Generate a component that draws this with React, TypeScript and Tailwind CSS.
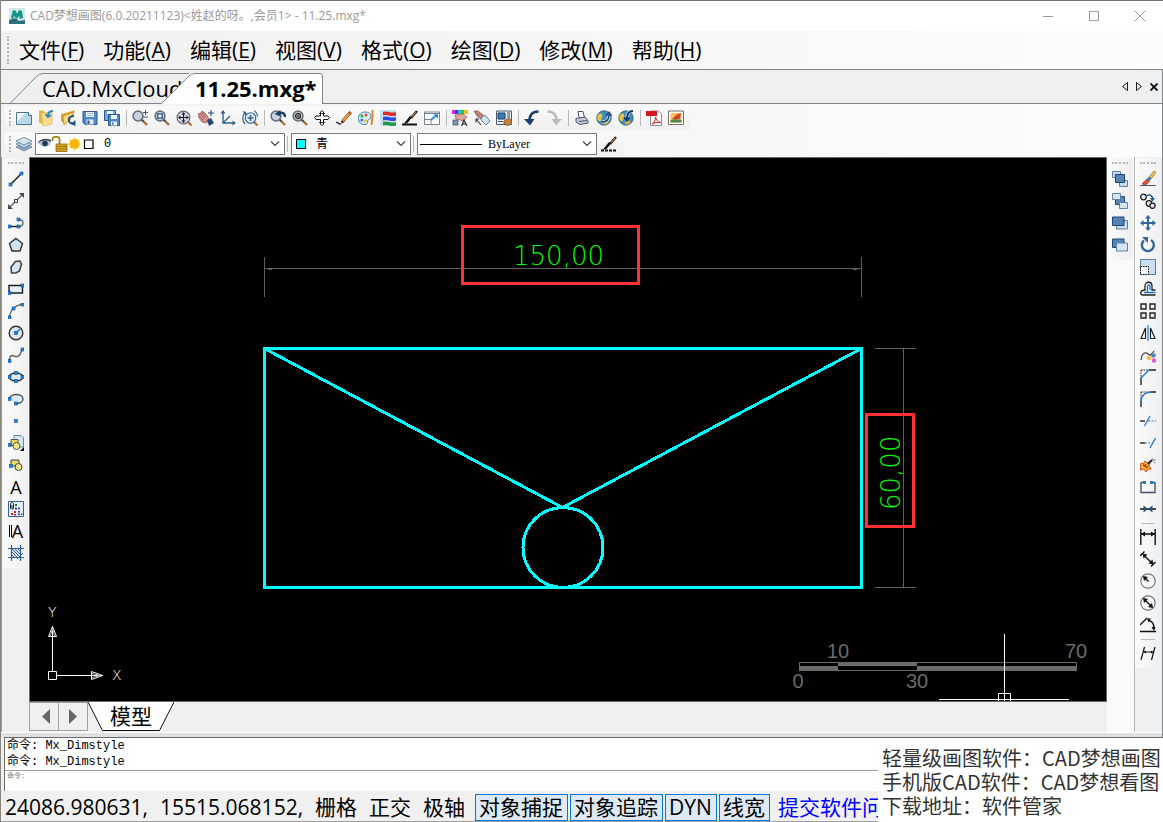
import type { ReactNode } from 'react';

type Tool = { id: string; label: string } | 'sep';

const BLUE = '#1f78d1';
const DARK = '#1c1c1c';

const node = (x: number, y: number) => (
  <rect x={x - 1.5} y={y - 1.5} width="3" height="3" fill="#1f86e0" stroke="#0b4f96" strokeWidth=".6" />
);

const lens = (
  <>
    <path d="M10 10l5 5" stroke="#a8703a" strokeWidth="2.4" />
    <path d="M9.6 9.6l1.6 1.6" stroke="#444" strokeWidth="2" />
    <circle cx="6" cy="6" r="4.9" fill="#c6d3df" stroke="#626a75" strokeWidth="1.5" />
  </>
);

const brush = (
  <>
    <path d="M15 1L9 8" stroke="#3a2a20" strokeWidth="2.6" />
    <path d="M14 2L10 6.600" stroke="#c98b4f" strokeWidth="1" />
    <path d="M10 7.500L5.500 13l-4 .9L6 8.500l2-2.500z" fill="#111" />
  </>
);

const globe = (
  <>
    <circle cx="8" cy="8" r="7.2" fill="#3f8fb8" stroke="#29546c" strokeWidth=".8" />
    <path d="M2 5c3-3 5-1 4 2s-1 5-3 4-2-4-1-6z" fill="#e6c64a" />
    <path d="M7 12c2-2 5-1 6 0-1 2-4 3-6 2z" fill="#e0a93a" />
  </>
);

const icons: Record<string, ReactNode> = {
  fresh: (
    <>
      <path d="M.5 2.5h12l3 3v9H.5z" fill="#b9d9ea" stroke="#4c7388" />
      <path d="M1 3h8l-8 9z" fill="#f4fafd" />
      <path d="M12.5 2.5v3h3" fill="#fff" stroke="#4c7388" />
    </>
  ),
  open: (
    <>
      <path d="M1 .5h5l1 2v12L1 13z" fill="#e8b93c" />
      <path d="M3 3l11-1v12l-9 2z" fill="#f7dd8c" stroke="#d9ab3a" strokeWidth=".6" />
      <path d="M15 1c-3 0-5 2-5 5M7.5 4L10 7l3-2" fill="none" stroke="#2b86c5" strokeWidth="1.8" />
    </>
  ),
  openCloud: (
    <>
      <path d="M1 4l8-2 6-2-2 5-9 8-3-2z" fill="#d8a631" />
      <path d="M3 6l11-4-4 8-6 5z" fill="#f6da83" stroke="#b98720" strokeWidth=".7" />
      <path d="M14 6c-4 0-6 2-5 5 .6 2 3 3 5 2" fill="none" stroke="#23507c" strokeWidth="2" />
      <path d="M15.5 10v6l-5-2z" fill="#23507c" />
    </>
  ),
  save: (
    <>
      <path d="M1 1.5h14v13H3l-2-2z" fill="#5089c6" stroke="#2c5b8f" />
      <path d="M4 2h8v5H4z" fill="#eaf3fb" />
      <path d="M5 3.5h6M5 5.5h6" stroke="#8eb3d6" strokeWidth=".8" />
      <path d="M4.5 9.5h7v5h-7z" fill="#dfeaf4" />
      <path d="M5.5 10.5h2V14h-2z" fill="#2c5b8f" />
    </>
  ),
  saveAll: (
    <>
      <path d="M.5.5h11v10H.5z" fill="#7ba7d6" stroke="#2c5b8f" />
      <path d="M3 1h6v3H3z" fill="#eaf3fb" />
      <path d="M4.5 4.5h11v11h-11z" fill="#5089c6" stroke="#2c5b8f" />
      <path d="M7 5h6v4H7zM7 11.5h6v4H7z" fill="#eaf3fb" />
      <path d="M8 12.5h1.5v2H8z" fill="#2c5b8f" />
    </>
  ),
  zoomRealtime: (
    <>
      {lens}
      <path d="M11 2.5h5M13.500 0v5M11 7h5" stroke="#34618f" strokeWidth="1.1" />
    </>
  ),
  zoomWindow: (
    <>
      {lens}
      <path d="M3.8 3.8h4.4v4.4H3.8z" fill="#fff" stroke="#1e4f86" strokeWidth="1.3" />
    </>
  ),
  zoomExtents: (
    <>
      <path d="M12 12l3.5 3.5" stroke="#a8703a" strokeWidth="2.2" />
      <circle cx="7.5" cy="7.5" r="6.4" fill="#d4d8dc" stroke="#66696e" strokeWidth="1.2" />
      <path d="M7.5 3v9M3 7.500h9" stroke="#16263a" strokeWidth="1.1" />
      <path d="M7.5 2l2 2.500h-4zM7.500 13l2-2.500h-4zM2 7.500l2.500-2v4zM13 7.500l-2.500-2v4z" fill="#16263a" />
    </>
  ),
  pan: (
    <>
      <path d="M0 4l3-1 1-2 3 2 3 4 1 4-3 2-4-1-3-4z" fill="#cf9089" stroke="#8c5550" strokeWidth=".7" />
      <path d="M2 3l4 5M4 2l4 5M1 6l4 4" stroke="#8c5550" strokeWidth=".7" />
      <path d="M9 10l4-2 3 5-5 3z" fill="#27476e" />
      <path d="M13 0v6M10 3h6" stroke="#27476e" strokeWidth="1.1" />
    </>
  ),
  axes: (
    <>
      <path d="M3 1v12h12M3 13l7-7" fill="none" stroke="#34618f" strokeWidth="1.4" />
      <path d="M.5 3.500L3 0l2.500 3.500zM12.500 10.500L16 13l-3.500 2.500z" fill="#34618f" />
    </>
  ),
  zoomAll: (
    <>
      <path d="M12 12l3.5 3.5" stroke="#a8703a" strokeWidth="2.2" />
      <circle cx="8.5" cy="8" r="5.3" fill="#e3eefa" stroke="#34618f" strokeWidth="1.1" />
      <path d="M8.5 5v6M5.500 8h6" stroke="#34618f" strokeWidth="1.5" />
      <path d="M3 14C0 11 0 5 3.500 2M3.500 2H.8M3.500 2v3M12 .8c2 1 3.500 3 3.500 5.700" fill="none" stroke="#34618f" strokeWidth="1.2" />
    </>
  ),
  zoomPrev: (
    <>
      {lens}
      <path d="M15 7c0-4-3-5-6-4" fill="none" stroke="#1d3e6d" strokeWidth="2.4" />
      <path d="M10.5 0v6.500l-6-2.500z" fill="#1d3e6d" />
    </>
  ),
  zoomObject: (
    <>
      {lens}
      <circle cx="6" cy="6" r="2.6" fill="#aebfae" stroke="#333" strokeWidth="1.2" />
      <path d="M6 3.5v5M3.500 6h5" stroke="#333" strokeWidth=".8" />
    </>
  ),
  crossArrows: (
    <>
      <path d="M6.500 6V2L8 .5 9.500 2v4H14l1.500 1.500L14 9.500H9.500V14L8 15.500 6.500 14V9.500H2L.5 7.500 2 6z" fill="#fff" stroke="#111" />
      <path d="M5 12.500h6M5 3.500h6" stroke="#111" strokeWidth=".8" />
    </>
  ),
  pencil: (
    <>
      <path d="M6 10l7.500-8.500 2 1.500L8 12l-2.500 1z" fill="#e6a046" stroke="#7a4a17" strokeWidth=".8" />
      <path d="M12.5 2l2.500 2" stroke="#b33" strokeWidth="1.3" />
      <path d="M5 13.500l1-3L8 12z" fill="#222" />
      <path d="M0 12.500c2-1 2 2 5 1.500" fill="none" stroke="#222" strokeWidth="1.4" />
    </>
  ),
  palette: (
    <>
      <path d="M7 2c4 0 6.500 2 6 5s-2 2-3 3 1 4-3 4.500S.5 12 .5 8.500 3 2 7 2z" fill="#d8ebf4" stroke="#3f7fa3" />
      <circle cx="4" cy="6" r="1.5" fill="#2aa84a" />
      <circle cx="8" cy="5" r="1.5" fill="#e04a3a" />
      <circle cx="3.8" cy="10" r="1.5" fill="#2c7be0" />
      <circle cx="7.5" cy="11" r="1.4" fill="#e8c02a" />
      <path d="M14.5 0v6l-1 9" stroke="#d98a32" strokeWidth="2" fill="none" />
    </>
  ),
  layers3: (
    <>
      <path d="M0 0h16v16H0z" fill="#c7e0ee" />
      <path d="M3 2c4-2 8 2 13 0v3.500c-5 2-9-2-13 0z" fill="#e02b2b" />
      <path d="M3 7c4-2 8 2 13 0v3.500c-5 2-9-2-13 0z" fill="#2b4be0" />
      <path d="M3 12c4-2 8 2 13 0v3.500c-5 2-9-2-13 0z" fill="#1f9a4c" />
    </>
  ),
  brushLine: (
    <>
      {brush}
      <path d="M0 14.5h15" stroke="#111" strokeWidth="2" />
    </>
  ),
  brushDots: (
    <>
      {brush}
      <path d="M0 14.5h16" stroke="#111" strokeWidth="2" strokeDasharray="3 1" />
    </>
  ),
  viewport: (
    <>
      <path d="M.5 2h15v12.500H.5z" fill="#fff" stroke="#76838f" />
      <path d="M1 3.500h14M1 9.500h6V14" fill="none" stroke="#76838f" />
      <path d="M7 10l5-4.500" stroke="#1e8bd8" strokeWidth="1.7" />
      <path d="M9.5 4.200H14v4.500z" fill="#1e8bd8" />
    </>
  ),
  colorPick: (
    <>
      <path d="M0 0h3v4H0z" fill="#e82bd0" />
      <path d="M3 0h3v4H3z" fill="#3a35e0" />
      <path d="M6 0h3v4H6z" fill="#25b8e0" />
      <path d="M9 0h3v4H9z" fill="#35c23a" />
      <path d="M12 0h4v4h-4z" fill="#ecc224" />
      <path d="M3 5l8-1 4 3-4 4-3-1-4-1z" fill="#dca59a" stroke="#935a50" strokeWidth=".7" />
      <path d="M1 10h5v5H1z" fill="#7f97b5" stroke="#33475f" strokeWidth=".7" />
      <path d="M9.5 16l2.500-6 3 6M10.500 14H14" fill="none" stroke="#222" strokeWidth="1.1" />
    </>
  ),
  handErase: (
    <>
      <path d="M0 1h4l5 4 1 3-3 1-4-3z" fill="#b9837b" stroke="#7b4b45" strokeWidth=".7" />
      <path d="M8 7l3-2 5 6-4 4-5-5z" fill="#cfe3ee" stroke="#55798d" strokeWidth=".9" />
      <path d="M2 9l5 6M2 9v3.500M2 9h3" fill="none" stroke="#333" strokeWidth="1.1" />
    </>
  ),
  settings: (
    <>
      <path d="M.5 1h15v13.500H.5z" fill="#e9eef3" stroke="#4d5a66" />
      <path d="M2 3h7v6H2z" fill="#3c78b8" stroke="#1c3d63" />
      <path d="M11 3h3M11 5h3M11 7h3M2 11.500h5" stroke="#3d4d5d" strokeWidth="1.1" />
      <path d="M8 11l5-3 3 3-4 5-4-2z" fill="#c98339" stroke="#7a4a17" strokeWidth=".7" />
    </>
  ),
  undo: (
    <>
      <path d="M14.5 1.500C8 1.500 5.500 5 5.500 11" fill="none" stroke="#1d3e6d" strokeWidth="2.6" />
      <path d="M0 9h10.500L6 15.500z" fill="#1d3e6d" />
    </>
  ),
  redo: (
    <>
      <path d="M1.5 1.500C8 1.500 10.500 5 10.500 11" fill="none" stroke="#b9bcc0" strokeWidth="2.6" />
      <path d="M16 9H5.500l4.500 6.500z" fill="#b9bcc0" />
    </>
  ),
  print: (
    <>
      <path d="M4 1.500h5l1.500 6H5z" fill="#fff" stroke="#46506b" />
      <path d="M2 8.500l9-1.500 3 3.500V13l-8 1.500L2 12z" fill="#c6cddd" stroke="#46506b" />
      <path d="M5 11.500l8-1" stroke="#46506b" />
    </>
  ),
  webOut: (
    <>
      {globe}
      <path d="M6 12c5 0 7-3 7-7" fill="none" stroke="#fff" strokeWidth="3" />
      <path d="M6 12c5 0 7-3 7-7M10 6l3-3.500L15.500 6" fill="none" stroke="#234b7c" strokeWidth="1.8" />
    </>
  ),
  webIn: (
    <>
      {globe}
      <path d="M15 1c-5 0-6 4-6 8" fill="none" stroke="#fff" strokeWidth="3.2" />
      <path d="M15 1c-5 0-6 4-6 8" fill="none" stroke="#173a66" strokeWidth="2.2" />
      <path d="M5 7.500h7.500L9 12z" fill="#173a66" />
    </>
  ),
  pdf: (
    <>
      <path d="M4.5 1h8l3 3v11.500h-11z" fill="#fff" stroke="#8a8a8a" />
      <path d="M0 1h11v5H0z" fill="#d8181c" />
      <path d="M6 14c2-1 4-5 3.500-7 1 3 2.500 5 5 5.500-3-.5-6 0-8.500 1.500z" fill="none" stroke="#d8181c" />
    </>
  ),
  picture: (
    <>
      <path d="M.5 1h15v13.500H.5z" fill="#fff" stroke="#77706a" />
      <path d="M2.500 3h11v9.500h-11z" fill="#f2c46b" />
      <path d="M4 9l4-4 5-2-1 6z" fill="#d8432b" />
      <path d="M2.500 10l5-1 6 1v2.500h-11z" fill="#55864a" />
    </>
  ),
  layerStack: (
    <>
      <path d="M0 11l8-3.500 8 3.500-8 4z" fill="#8fa9c4" stroke="#4f6f91" strokeWidth=".7" />
      <path d="M0 8l8-3.500L16 8l-8 4z" fill="#b8cce0" stroke="#4f6f91" strokeWidth=".7" />
      <path d="M0 5l8-3.500L16 5 8 9z" fill="#d8e5f1" stroke="#4f6f91" strokeWidth=".7" />
    </>
  ),
  line: (
    <>
      <path d="M2.5 13.500l11-11" stroke={DARK} strokeWidth="1.5" />
      {node(2.5, 13.5)}
      {node(13.5, 2.5)}
    </>
  ),
  xline: (
    <>
      <path d="M1.5 14.500l13-13" stroke="#555a66" strokeWidth="1.2" />
      <path d="M0 16v-5l5 5zM16 0v5l-5-5z" fill="#43485a" />
      <path d="M6.5 6.500h3v3h-3z" fill="#fff" stroke="#333" />
    </>
  ),
  pline: (
    <>
      <path d="M1.5 11.500H11" stroke={DARK} strokeWidth="1.4" />
      <path d="M10.5 4.500c3 0 4.500 1 4.500 3.500s-2 3.500-4.500 3.500" fill="none" stroke="#6a6a6a" strokeWidth="1.4" />
      {node(1.5, 11.5)}
      {node(10.5, 11.5)}
      {node(10.5, 4.5)}
    </>
  ),
  polygon: <path d="M8 1.500l6.500 5-2.500 7.500H4L1.500 6.500z" fill="#d2e3f1" stroke="#333" strokeWidth="1.4" />,
  hull: <path d="M7.5 2.500l4.500-.5 1.500 3-2 7-3.500 2H3.500L3 8z" fill="#d2e3f1" stroke="#444" strokeWidth="1.6" />,
  rect: (
    <>
      <path d="M1 4.500h13.500V12H1z" fill="#e3eef8" stroke={DARK} strokeWidth="1.4" />
      {node(1.5, 12)}
      {node(14.5, 4.5)}
    </>
  ),
  arc: (
    <>
      <path d="M1.5 14.500C2 7 7 2 14.500 1.500" fill="none" stroke="#6d6458" strokeWidth="1.4" />
      {node(1.5, 14.5)}
      {node(5.5, 5.5)}
      {node(14.5, 1.5)}
    </>
  ),
  circle: (
    <>
      <circle cx="8" cy="8" r="6.8" fill="#dbe8f5" stroke="#333" strokeWidth="1.4" />
      <path d="M8 8l4-4" stroke={BLUE} strokeWidth="1.4" />
      {node(8, 8)}
    </>
  ),
  spline: (
    <>
      <path d="M1.5 14C1.500 8 4 8 6 9s6 2 8-7" fill="none" stroke="#6d6458" strokeWidth="1.4" />
      {node(1.5, 14)}
      {node(14.5, 2.5)}
    </>
  ),
  ellipse: (
    <>
      <ellipse cx="8" cy="8" rx="6.8" ry="4" fill="#dbe8f5" stroke="#333" strokeWidth="1.3" />
      {node(8, 4)}
      {node(8, 12)}
      {node(1.5, 8)}
      {node(14.5, 8)}
    </>
  ),
  ellipseArc: (
    <>
      <path d="M1.5 8c0-6 13.500-6 13.500 0 0 3-3 4.500-7 4.500" fill="#dbe8f5" stroke="#555" strokeWidth="1.4" />
      {node(1.5, 8)}
      {node(8, 12.5)}
    </>
  ),
  point: node(8, 8),
  insert: (
    <>
      <path d="M6 .5h7L15.500 3v9H6z" fill="#d9e8f2" stroke="#5e87a3" />
      <path d="M3 4.500h7v6H3z" fill="#e9dc5f" stroke="#556" />
      <circle cx="8.5" cy="11" r="3.5" fill="#efe68a" stroke="#556" />
      {node(2, 10)}
      <path d="M16 12v4h-4z" fill="#000" />
    </>
  ),
  block: (
    <>
      <path d="M3 3h8v6H3z" fill="#e9dc5f" stroke="#345" />
      <circle cx="10.5" cy="10" r="3.5" fill="#efe68a" stroke="#345" />
      {node(3, 9)}
    </>
  ),
  attribute: (
    <>
      <path d="M.5.5h15v15H.5z" fill="#e6eef8" stroke="#34618f" />
      <path d="M2.500 8V3c0-2 3-2 3 0v4.500c0 1-1.500 1-1.500 0V4" fill="none" stroke="#222" />
      <path d="M7 3h2v2H7zM10 6.500h2v2h-2z" fill="#1e7a35" />
      <path d="M3 12h2v2H3zM6 10h2v2H6zM6 13h2v1.500H6z" fill="#d52424" />
      <path d="M7 6.500h2v2H7zM10 10h2v1.500h-2zM10 12.500h2V14h-2zM13 12.500h1.500V14H13z" fill="#2a3fae" />
    </>
  ),
  hatch: (
    <>
      <path d="M3.5 0v16M12.500 0v16M0 3.500h16M0 12.500h16" stroke="#2f6195" strokeWidth="1.2" />
      <path d="M4 4h8v8H4z" fill="#d5e4f2" />
      <path d="M4 4l8 8M7 4l5 5M4 7l5 5M10 4l2 2M4 10l2 2M9 14l6-6" stroke="#2f6195" />
    </>
  ),
  front1: (
    <>
      <path d="M.5.5h8v6h-8zM7.500 9.500h8v6h-8z" fill="#c9dcec" stroke="#5d83a8" />
      <path d="M3.5 3.500h9v8h-9z" fill="#5583b6" stroke="#1f4878" />
    </>
  ),
  back1: (
    <>
      <path d="M3.5 3.500h9v8h-9z" fill="#5583b6" stroke="#1f4878" />
      <path d="M.5.5h8v6h-8zM7.500 9.500h8v6h-8z" fill="#d5e4f0" stroke="#5d83a8" />
    </>
  ),
  front2: (
    <>
      <path d="M4.5 5.500h11V14h-11z" fill="#c9dcec" stroke="#5d83a8" />
      <path d="M.5 2H12v8.500H.5z" fill="#5583b6" stroke="#1f4878" />
    </>
  ),
  back2: (
    <>
      <path d="M.5 2H12v8.500H.5z" fill="#5583b6" stroke="#1f4878" />
      <path d="M4.5 6h11v8h-11z" fill="#d5e4f0" stroke="#5d83a8" />
    </>
  ),
  erase: (
    <>
      <path d="M9 6l5-6 2 1.500L11 8z" fill="#f0c24a" stroke="#8a6420" strokeWidth=".7" />
      <path d="M7 8l2-2.500 2.500 2-2 2.500z" fill="#3f78ae" />
      <path d="M2.5 12L7 8l2.500 2-3 3.500H3z" fill="#e05240" stroke="#7c2a20" strokeWidth=".6" />
      <path d="M0 14.500h16" stroke="#555" />
    </>
  ),
  copy: (
    <>
      <circle cx="3.5" cy="4" r="2.8" fill="#e4ebf2" stroke="#222" strokeWidth="1.3" />
      <circle cx="9" cy="10.5" r="2.8" fill="#e4ebf2" stroke="#222" strokeWidth="1.3" />
      <circle cx="12.5" cy="12.800" r="2.6" fill="#e4ebf2" stroke="#222" strokeWidth="1.3" />
      <path d="M7 2.500c3-1.500 5.500 0 5.500 3" fill="none" stroke="#23588f" strokeWidth="1.5" />
      <path d="M10 5h5l-2.500 3.500z" fill="#23588f" />
    </>
  ),
  move: (
    <>
      <path d="M8 2v12M2 8h12" stroke="#34679c" strokeWidth="2" />
      <path d="M8 0l3 3.500H5zM8 16l3-3.500H5zM0 8l3.500-3v6zM16 8l-3.500-3v6z" fill="#34679c" />
    </>
  ),
  rotate: (
    <>
      <path d="M4 3.500a6 6 0 1 0 7-.5" fill="none" stroke="#34679c" strokeWidth="2.4" />
      <path d="M2 0h6v6z" fill="#34679c" />
    </>
  ),
  scale: (
    <>
      <path d="M.5.5h15v15H.5z" fill="#c9dff0" stroke="#5a7f9c" />
      <path d="M.5 7.500h8v8h-8z" fill="#f3f8fc" stroke="#111" strokeDasharray="1.5 1" />
    </>
  ),
  offset: (
    <>
      <path d="M15.5 14H2.500C-.5 14 0 9 5 9V5c0-5 7-5 7 0v4h3.500" fill="none" stroke="#222" strokeWidth="1.3" />
      <path d="M15.5 11.500H4M7.500 11.500v-6c0-2 2.500-2 2.500 0V9" fill="none" stroke={BLUE} strokeWidth="1.3" />
    </>
  ),
  array: <path d="M1 1h5v5H1zM10 1h5v5h-5zM1 10h5v5H1zM10 10h5v5h-5z" fill="#e9f0f7" stroke="#222" strokeWidth="1.4" />,
  mirror: (
    <>
      <path d="M1 13.500h4.500V3zM15 13.500h-4.500V3z" fill="#fff" stroke="#222" strokeWidth="1.2" />
      <path d="M8 0v16" stroke={BLUE} strokeWidth="1.2" />
    </>
  ),
  editSpline: (
    <>
      <path d="M1 13c1-8 5-8 7-6s4 0 6-3" fill="none" stroke="#444" strokeWidth="1.3" />
      <circle cx="9" cy="11" r="2.3" fill="#efc04a" />
      <circle cx="14" cy="13.5" r="2.2" fill="#d95bd0" />
      <path d="M10 8l5-2 1 3-3 2z" fill="#4e82cf" />
    </>
  ),
  chamfer: (
    <>
      <path d="M1 1h8M1 1v8" stroke="#222" strokeDasharray="1.5 1" />
      <path d="M9 1h7M1 9v7" stroke="#222" strokeWidth="1.4" />
      <path d="M1 9l8-8" stroke={BLUE} strokeWidth="1.4" />
    </>
  ),
  fillet: (
    <>
      <path d="M1 1h8M1 1v9" stroke="#222" strokeDasharray="1.5 1" />
      <path d="M10 1h6M1 10v6" stroke="#222" strokeWidth="1.4" />
      <path d="M1 11C1 5 5 1 12 1" fill="none" stroke={BLUE} strokeWidth="1.7" />
    </>
  ),
  trim: (
    <>
      <path d="M0 8h5" stroke="#222" strokeWidth="1.4" />
      <path d="M8 8h8" stroke={BLUE} strokeWidth="1.2" strokeDasharray="2 1.5" />
      <path d="M4.5 13L10 3" stroke={BLUE} strokeWidth="1.3" />
    </>
  ),
  extend: (
    <>
      <path d="M0 8h5" stroke="#222" strokeWidth="1.4" />
      <path d="M5 8h7" stroke={BLUE} strokeWidth="1.2" strokeDasharray="2 1.5" />
      <path d="M10 13l5.500-10" stroke={BLUE} strokeWidth="1.3" />
    </>
  ),
  explode: (
    <>
      <path d="M0 7l4-1 1-2 2 2 3-1-1 4 2 3-3 0-2 3-2-3-4 1 1-3z" fill="#f6c430" stroke="#d9401c" />
      <path d="M3 8l2 1M6 7l-1 3M8 9l-2 2" stroke="#b3201a" strokeWidth="1.4" />
      <path d="M8 7l4-4" stroke="#333" strokeWidth="2.4" />
      <path d="M12 3l1-2M13 3.500l3-1M13.500 5l2 1" stroke="#6f8aa3" />
    </>
  ),
  breakAt: (
    <>
      <path d="M3 3.500H1v10h14v-10h-2" fill="none" stroke="#46536b" strokeWidth="1.4" />
      <path d="M3 2h3v3H3zM10 2h3v3h-3z" fill={BLUE} />
    </>
  ),
  join: (
    <>
      <path d="M0 8h16" stroke="#222" strokeWidth="1.6" />
      <path d="M3.5 4.500L8 8l-4.500 3.500zM12.500 4.500L8 8l4.500 3.500z" fill="#2c5170" />
    </>
  ),
  dimLinear: (
    <>
      <path d="M.8 0v16M15.200 0v16M1 5h14" stroke="#111" strokeWidth="1.4" />
      <path d="M1 5l4-2.500v5zM15 5l-4-2.500v5z" fill="#111" />
    </>
  ),
  dimAligned: (
    <>
      <path d="M0 5L4.500.5M11 15.500l4.500-4.500M3 3.500l9.500 9" stroke="#111" strokeWidth="1.4" />
      <path d="M2.5 2.500l5 1-4 4zM13.500 13.500l-5-1 4-4z" fill="#111" />
    </>
  ),
  dimRadius: (
    <>
      <circle cx="8" cy="8" r="7.2" fill="none" stroke="#777" strokeWidth="1.2" />
      <path d="M8.5 8.500L4 4" stroke="#111" strokeWidth="1.4" />
      <path d="M3 3l5 1-4 4z" fill="#111" />
    </>
  ),
  dimDiameter: (
    <>
      <circle cx="8" cy="8" r="7.2" fill="none" stroke="#777" strokeWidth="1.2" />
      <path d="M4 4l8 8" stroke="#111" strokeWidth="1.4" />
      <path d="M3 3l5 1-4 4zM13 13l-5-1 4-4z" fill="#111" />
    </>
  ),
  dimAngular: (
    <>
      <path d="M0 14.500h16M0 8l7-7M8 3c4 1 6 4 6 8" fill="none" stroke="#111" strokeWidth="1.3" />
      <path d="M7 1.500h4l-2.500 4zM14 14l-2.500-4h4z" fill="#111" />
    </>
  ),
  dimOblique: (
    <>
      <path d="M1 15L4.500 2M11.500 15L15 2M4 7h9" fill="none" stroke="#111" strokeWidth="1.2" />
      <path d="M3.5 7L6 5.500v3zM13.500 7L11 5.500v3z" fill="#111" />
    </>
  ),
};

function named(list: [string, string][]): Tool[] {
  return list.map(([id, label]) => (id === '-' ? 'sep' : { id, label }));
}

const standardTools = named([
  ['fresh', '新建'], ['open', '打开'], ['openCloud', '打开云图'], ['save', '保存'], ['saveAll', '另存为'],
  ['-', ''],
  ['zoomRealtime', '实时缩放'], ['zoomWindow', '窗口缩放'], ['zoomExtents', '范围缩放'], ['pan', '平移'], ['axes', '坐标系'], ['zoomAll', '全部缩放'],
  ['-', ''],
  ['zoomPrev', '上一视图'], ['zoomObject', '对象缩放'], ['crossArrows', '居中'], ['pencil', '铅笔'], ['palette', '颜色'], ['layers3', '线型'], ['brushLine', '格式刷'], ['viewport', '视口'],
  ['-', ''],
  ['colorPick', '拾色'], ['handErase', '清理'], ['settings', '选项'],
  ['-', ''],
  ['undo', '撤销'], ['redo', '重做'],
  ['-', ''],
  ['print', '打印'], ['webOut', '上传'], ['webIn', '下载'],
  ['-', ''],
  ['pdf', '输出PDF'], ['picture', '输出图片'],
]);

const drawTools = named([
  ['line', '直线'], ['xline', '构造线'], ['pline', '多段线'], ['polygon', '正多边形'], ['hull', '多边形'], ['rect', '矩形'],
  ['arc', '圆弧'], ['circle', '圆'], ['spline', '样条曲线'], ['ellipse', '椭圆'], ['ellipseArc', '椭圆弧'], ['point', '点'],
  ['insert', '插入块'], ['block', '创建块'], ['text', '单行文字'], ['attribute', '属性'], ['mtext', '多行文字'], ['hatch', '填充'],
]);

const orderTools = named([
  ['front1', '置于对象之上'], ['back1', '置于对象之下'], ['front2', '前置'], ['back2', '后置'],
]);

const modifyTools = named([
  ['erase', '删除'], ['copy', '复制'], ['move', '移动'], ['rotate', '旋转'], ['scale', '缩放'], ['offset', '偏移'],
  ['array', '阵列'], ['mirror', '镜像'], ['editSpline', '编辑样条'], ['chamfer', '倒角'], ['fillet', '圆角'], ['trim', '修剪'],
  ['extend', '延伸'], ['explode', '分解'], ['breakAt', '打断'], ['join', '合并'],
  ['-', ''],
  ['dimLinear', '线性标注'], ['dimAligned', '对齐标注'], ['dimRadius', '半径标注'], ['dimDiameter', '直径标注'], ['dimAngular', '角度标注'],
  ['-', ''],
  ['dimOblique', '倾斜标注'],
]);

const menus = [
  ['文件', 'F'], ['功能', 'A'], ['编辑', 'E'], ['视图', 'V'], ['格式', 'O'], ['绘图', 'D'], ['修改', 'M'], ['帮助', 'H'],
];

const toggles = ['对象捕捉', '对象追踪', 'DYN', '线宽'];

function ToolButton({ id, label }: { id: string; label: string }) {
  return (
    <button aria-label={label} className="flex size-[22px] shrink-0 items-center justify-center hover:bg-sky-100">
      {id === 'text' && <span className="text-lg leading-3">A</span>}
      {id === 'mtext' && (
        <span className="flex items-center text-lg leading-3">
          <span className="h-3 w-[3px] border-x border-black" />A
        </span>
      )}
      {icons[id] && (
        <svg viewBox="0 0 16 16" className="size-4">
          {icons[id]}
        </svg>
      )}
    </button>
  );
}

function GripV() {
  return <div className="h-4 w-0 border-l-2 border-dotted border-[#b5b5b5]" />;
}

function VerticalBar({ tools }: { tools: Tool[] }) {
  return (
    <div className="flex flex-col items-center rounded bg-linear-to-r from-[#fbfbfb] to-[#efefef] pb-1">
      <div className="mt-1 mb-1 h-0 w-4 border-t-2 border-dotted border-[#b5b5b5]" />
      {tools.map((tool, i) =>
        tool === 'sep' ? (
          <div key={i} className="flex h-1.5 items-center">
            <div className="h-px w-3.5 bg-[#b9b9b9]" />
          </div>
        ) : (
          <ToolButton key={i} {...tool} />
        ),
      )}
    </div>
  );
}

function Chevron() {
  return (
    <svg viewBox="0 0 10 6" className="pointer-events-none absolute right-1 h-1.5 w-2.5">
      <path d="M1 .5l4 4 4-4" fill="none" stroke="#444" strokeWidth="1.2" />
    </svg>
  );
}

function TitleBar() {
  return (
    <header className="flex h-[31px] items-center border-t border-[#77736e] bg-white pl-2 text-xs text-[#999]">
      <svg viewBox="0 0 16 16" className="mr-1 size-4">
        <path d="M0 0h16v16H0z" fill="#d3e8e6" />
        <path d="M2 10l2-8 3 1 1 3 2-4 3 1 1 7-3 1-1-3-2 3-3-3-1 3z" fill="#12968a" />
        <path d="M0 12l6-2 4 3 6-1v4H0z" fill="#2a6f7c" />
      </svg>
      <h1 className="pl-px">CAD梦想画图(6.0.20211123)&lt;姓赵的呀。,会员1&gt; - 11.25.mxg*</h1>
      <div className="ml-auto flex">
        <button aria-label="最小化" className="flex h-7 w-[46px] items-center justify-center">
          <svg viewBox="0 0 10 10" className="size-2.5"><path d="M0 5.500h10" stroke="#999" /></svg>
        </button>
        <button aria-label="最大化" className="flex h-7 w-[46px] items-center justify-center">
          <svg viewBox="0 0 10 10" className="size-2.5"><path d="M.5.5h9v9h-9z" fill="none" stroke="#999" /></svg>
        </button>
        <button aria-label="关闭" className="flex h-7 w-[46px] items-center justify-center">
          <svg viewBox="0 0 10 10" className="size-2.5"><path d="M0 0l10 10M10 0L0 10" stroke="#999" /></svg>
        </button>
      </div>
    </header>
  );
}

function MenuBar() {
  return (
    <nav className="flex h-[38px] items-center bg-linear-to-r from-[#f0f0f0] to-[#fcfcfc] pl-1.5">
      <div className="h-7 w-0 border-l-2 border-dotted border-[#b5b5b5]" />
      <div className="ml-2.5 flex gap-[19px]">
        {menus.map(([title, key]) => (
          <button key={key} className="text-[21px] leading-7 whitespace-nowrap">
            {title}(<span className="underline decoration-1 underline-offset-2">{key}</span>)
          </button>
        ))}
      </div>
    </nav>
  );
}

function DocumentTabs() {
  return (
    <div className="flex h-[35px] items-end border-t border-[#82828c] bg-[#efefef]">
      <div className="w-2 self-stretch border-b border-[#82828c]" />
      <button className="relative flex h-[31px] w-[180px] items-center text-[22px] leading-7">
        <svg viewBox="0 0 180 31" className="absolute inset-0 size-full">
          <path d="M0 30.500h180" stroke="#82828c" />
          <path d="M1 30.500L27 4Q30 .5 34 .5h146" fill="none" stroke="#82828c" />
        </svg>
        <span className="relative pb-0.5 pl-[33px]">CAD.MxCloud</span>
      </button>
      <button className="relative -ml-7 flex h-[31px] w-[162px] items-center text-[22px] leading-7 font-bold">
        <svg viewBox="0 0 162 31" className="absolute inset-0 size-full">
          <path d="M0 31L28 3Q30 .5 34 .5h125q2.500 0 2.500 2.500v28z" fill="#fff" />
          <path d="M0 31L28 3Q30 .5 34 .5h125q2.500 0 2.500 2.500v28" fill="none" stroke="#82828c" />
        </svg>
        <span className="relative pb-0.5 pl-[34px]">11.25.mxg*</span>
      </button>
      <div className="flex flex-1 items-center justify-end gap-2 self-stretch border-b border-[#82828c] pr-1">
        <button aria-label="上一个">
          <svg viewBox="0 0 6 9" className="h-[9px] w-1.5"><path d="M5.500.5v8l-5-4z" fill="none" stroke="#111" /></svg>
        </button>
        <button aria-label="下一个">
          <svg viewBox="0 0 6 9" className="h-[9px] w-1.5"><path d="M.5.5v8l5-4z" fill="none" stroke="#111" /></svg>
        </button>
        <button aria-label="关闭图纸">
          <svg viewBox="0 0 8 8" className="size-2"><path d="M.5.5l7 7M7.500.5l-7 7" stroke="#000" strokeWidth="1.8" /></svg>
        </button>
      </div>
    </div>
  );
}

function PropertyBar() {
  return (
    <div className="flex h-6 w-max items-center rounded bg-linear-to-b from-[#fafafa] to-[#f0f0f0] pr-1 pl-[5px]">
      <GripV />
      <div className="ml-0.5">
        <ToolButton id="layerStack" label="图层管理" />
      </div>
      <div className="relative flex h-[22px] w-[250px] items-center border border-[#7a7a7a] bg-white pl-0.5">
        <svg viewBox="0 0 58 16" className="h-4 w-[58px] shrink-0">
          <path d="M0 7c3-4 9-4 13-2l-1 4c-4 3-9 2-12-2z" fill="#b7c6d6" />
          <path d="M0 6c4-4 9-4 13-2v2C9 4 5 4 0 7z" fill="#3c4a5a" />
          <circle cx="7" cy="7.5" r="2.8" fill="#26394f" />
          <path d="M14.5 5V3c0-3 7-3 7 0v6" fill="none" stroke="#a8821c" strokeWidth="1.8" />
          <path d="M18 8h11v7.500H18z" fill="#d9a71f" stroke="#8a6510" strokeWidth=".8" />
          <path d="M18 10.500h11M18 13h11" stroke="#8a6510" strokeWidth=".7" />
          <path d="M36.500 1.500v13M30 8h13M32 3.500l9 9M41 3.500l-9 9" stroke="#e8d23a" strokeWidth="1.2" />
          <circle cx="36.5" cy="8" r="5" fill="#fdb50a" />
          <path d="M46.500 4H55v8.500h-8.500z" fill="#fff" stroke="#000" strokeWidth="1.2" />
        </svg>
        <select aria-label="图层" className="h-full flex-1 appearance-none bg-transparent pl-2 font-['Liberation_Mono',monospace] text-xs">
          <option>0</option>
        </select>
        <Chevron />
      </div>
      <div className="mr-[3px] ml-0.5 h-4 w-px bg-[#b9b9b9]" />
      <div className="relative flex h-[22px] w-[120px] items-center border border-[#7a7a7a] bg-white pl-1">
        <span className="size-2.5 shrink-0 border border-black bg-[#00ffff]" />
        <select aria-label="颜色" className="h-full flex-1 appearance-none bg-transparent pl-2.5 text-xs">
          <option>青</option>
        </select>
        <Chevron />
      </div>
      <div className="mr-[3px] ml-0.5 h-4 w-px bg-[#b9b9b9]" />
      <div className="relative mr-px flex h-[22px] w-[180px] items-center border border-[#7a7a7a] bg-white pl-0.5">
        <span className="h-px w-[62px] shrink-0 bg-black" />
        <select aria-label="线型" className="h-full flex-1 appearance-none bg-transparent pl-1.5 font-['Liberation_Serif',serif] text-xs">
          <option>ByLayer</option>
        </select>
        <Chevron />
      </div>
      <ToolButton id="brushDots" label="线宽" />
    </div>
  );
}

function Toolbars() {
  return (
    <div className="flex flex-col gap-0.5 bg-linear-to-r from-[#f0f0f0] to-[#fcfcfc] pt-0.5 pb-px pl-[3px]">
      <div className="flex h-6 w-max items-center rounded bg-linear-to-b from-[#fafafa] to-[#f0f0f0] pr-1 pl-[5px]">
        <GripV />
        <div className="ml-0.5 flex items-center">
          {standardTools.map((tool, i) =>
            tool === 'sep' ? (
              <div key={i} className="flex w-1.5 justify-center">
                <div className="h-4 w-px bg-[#b9b9b9]" />
              </div>
            ) : (
              <ToolButton key={i} {...tool} />
            ),
          )}
        </div>
      </div>
      <PropertyBar />
    </div>
  );
}

function DrawingView() {
  return (
    <div className="flex-1 border border-[#696969] bg-black">
      <svg viewBox="30 158 1076 543" className="block w-full" fill="none">
        {/* dimensions */}
        <g stroke="#606060">
          <path d="M264.5 268.500h597M264.500 257v40M861.500 257v40" />
          <path d="M875 348.500h41M875 587.500h41M903.500 348v239" />
          <path d="M268 269.500h4M853 269.500h4" />
        </g>
        <g fill="#00ff00" className="font-['DejaVu_Sans',sans-serif] text-[26px] font-extralight">
          <text x="513" y="265">150,00</text>
          <text x="900" y="510" transform="rotate(-90 900 510)">60,00</text>
        </g>

        {/* envelope */}
        <g stroke="#00ffff" strokeWidth="3" shapeRendering="crispEdges">
          <path d="M264.5 348.500h597v239h-597z" />
          <path d="M264.5 348.500l298 159 299-159" />
          <circle cx="563" cy="547.5" r="40" />
        </g>

        <g stroke="#ff3333" strokeWidth="3">
          <path d="M462.5 226.500h176v57h-176z" />
          <path d="M866.5 414.500h47v112h-47z" />
        </g>

        {/* UCS */}
        <g stroke="#fff">
          <path d="M48.5 671.500h8v8h-8zM52.500 671v-45M57 675.500h46" />
          <path d="M52.5 626.500l-4 10h8zM102.500 675.500l-11-4v8z" />
          <path d="M52.5 628l-2 8M52.500 628l2 8M101 675.500l-9-2M101 675.500l-9 2" stroke="#aaa" />
        </g>
        <g fill="#fff" className="font-['DejaVu_Sans',sans-serif] text-sm font-extralight">
          <text x="48" y="617">Y</text>
          <text x="112" y="680">X</text>
        </g>

        {/* scale bar */}
        <path d="M799.5 662.500h277v8h-277z" stroke="#6b6b6b" />
        <path d="M799 666h39v5h-39zM838 662h79v4h-79zM917 666h160v5H917z" fill="#6b6b6b" />
        <g fill="#6b6b6b" textAnchor="middle" className="font-['Liberation_Sans',sans-serif] text-[20px]">
          <text x="838" y="658">10</text>
          <text x="1076" y="658">70</text>
          <text x="798" y="688">0</text>
          <text x="917" y="688">30</text>
        </g>

        {/* crosshair */}
        <path d="M1004.5 634v67M939 699.500h130M998.500 701v-7.500h12v7.500" stroke="#fff" />
      </svg>
    </div>
  );
}

function SheetTabs() {
  return (
    <div className="flex h-[30px] bg-[#efefef]">
      <button aria-label="上一页" className="flex h-[29px] w-[30px] items-center justify-center border border-[#a0a0a0] pl-1">
        <svg viewBox="0 0 8 15" className="h-[15px] w-2"><path d="M8 0v15L0 7.500z" fill="#666" /></svg>
      </button>
      <button aria-label="下一页" className="-ml-px flex h-[29px] w-[30px] items-center justify-center border border-[#a0a0a0]">
        <svg viewBox="0 0 8 15" className="h-[15px] w-2"><path d="M0 0v15l8-7.500z" fill="#666" /></svg>
      </button>
      <button className="relative flex h-[29px] w-[86px] items-center justify-center text-[21px]">
        <svg viewBox="0 0 86 29" className="absolute inset-0 size-full">
          <path d="M0 0l14.500 28.500h57L86 0" fill="#fff" stroke="#111" />
        </svg>
        <span className="relative">模型</span>
      </button>
    </div>
  );
}

function CommandPanel() {
  return (
    <section className="ml-[3px] border-t border-l border-[#696969] bg-white font-['Liberation_Mono','Noto_Sans_CJK_SC',monospace]">
      <div className="pl-0.5 text-xs leading-4">
        <p>命令: Mx_Dimstyle</p>
        <p>命令: Mx_Dimstyle</p>
      </div>
      <div className="flex h-[21px] items-start border-t border-[#a0a0a0] pl-0.5 text-[7px] leading-[10px] text-[#777]">
        <label htmlFor="command">命令:</label>
        <input id="command" className="h-4 flex-1 text-xs outline-none" />
      </div>
    </section>
  );
}

function StatusBar() {
  return (
    <footer className="flex h-[31px] items-center overflow-hidden border-t-2 border-b border-t-[#efefef] border-b-[#a0a0a0] bg-[#f0f0f0] pr-[285px] pl-1 text-[21px] leading-[26px] whitespace-nowrap">
      <span>24086.980631,</span>
      <span className="ml-3">15515.068152,</span>
      <div className="ml-3 flex gap-3">
        <button>栅格</button>
        <button>正交</button>
        <button>极轴</button>
      </div>
      <div className="ml-2.5 flex gap-0.5">
        {toggles.map((label) => (
          <button key={label} aria-pressed="true" className="border border-[#0078d7] bg-[#dde9f4] px-1 pl-[3px] leading-[25px]">
            {label}
          </button>
        ))}
      </div>
      <a href="#feedback" className="ml-2 min-w-0 flex-1 overflow-hidden text-[#0000ff]">
        提交软件问
      </a>
    </footer>
  );
}

export default function App() {
  return (
    <div className="relative flex min-h-screen flex-col overflow-hidden border-l border-[#8a857a] bg-[#f0f0f0] font-['Open_Sans','Noto_Sans_CJK_SC',sans-serif] text-black">
      <TitleBar />
      <MenuBar />
      <div className="flex flex-1 flex-col border-r border-[#828790]">
        <DocumentTabs />
        <Toolbars />
        <div className="flex flex-1">
          <aside className="w-7 border-l border-[#a0a0a0] pt-px pl-px">
            <VerticalBar tools={drawTools} />
          </aside>
          <main className="flex min-w-0 flex-1 flex-col">
            <DrawingView />
            <SheetTabs />
          </main>
          <aside className="w-[27px] bg-[#fafafa] pt-px pr-px">
            <VerticalBar tools={orderTools} />
          </aside>
          <aside className="w-7 border-l border-[#b5b5b5] pt-px pr-px">
            <VerticalBar tools={modifyTools} />
          </aside>
        </div>
        <div className="h-[5px] border-t border-white bg-[#e0e0e0]" />
      </div>
      <CommandPanel />
      <StatusBar />

      <div className="absolute right-0 bottom-0 w-[285px] bg-white py-1 pl-1 font-['Noto_Sans_CJK_SC',sans-serif] text-xl leading-6 whitespace-nowrap text-[#333]">
        <p>轻量级画图软件：CAD梦想画图</p>
        <p>手机版CAD软件：CAD梦想看图</p>
        <p>下载地址：软件管家</p>
      </div>
    </div>
  );
}
